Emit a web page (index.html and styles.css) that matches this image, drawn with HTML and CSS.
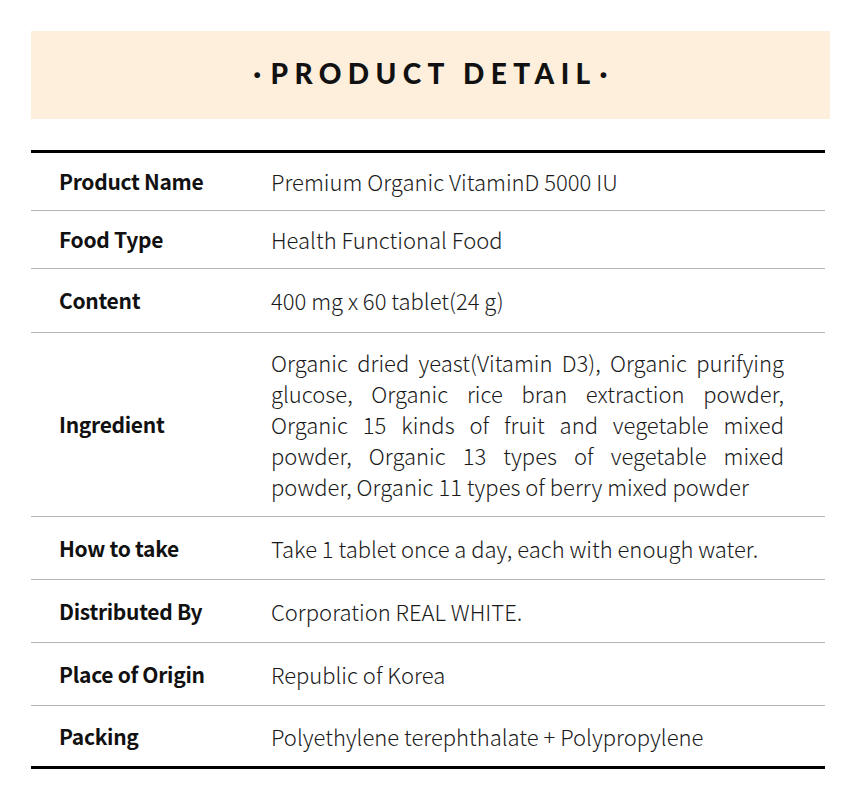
FILE: index.html
```html
<!DOCTYPE html>
<html lang="en">
<head>
<meta charset="utf-8">
<title>Product Detail</title>
<link rel="stylesheet" href="styles.css">
</head>
<body>
<div class="page">
  <header class="banner">
    <h1 class="banner-title"><span class="dot">·</span>PRODUCT DETAIL<span class="dot">·</span></h1>
  </header>
  <div class="spec">
    <div class="row r1"><div class="label">Product Name</div><div class="value">Premium Organic VitaminD 5000 IU</div></div>
    <div class="row r2"><div class="label">Food Type</div><div class="value">Health Functional Food</div></div>
    <div class="row r3"><div class="label">Content</div><div class="value">400 mg x 60 tablet(24 g)</div></div>
    <div class="row r4"><div class="label">Ingredient</div><div class="value justify">Organic dried yeast(Vitamin D3), Organic purifying glucose, Organic rice bran extraction powder, Organic 15 kinds of fruit and vegetable mixed powder, Organic 13 types of vegetable mixed powder, Organic 11 types of berry mixed powder</div></div>
    <div class="row"><div class="label">How to take</div><div class="value">Take 1 tablet once a day, each with enough water.</div></div>
    <div class="row"><div class="label">Distributed By</div><div class="value">Corporation REAL WHITE.</div></div>
    <div class="row"><div class="label">Place of Origin</div><div class="value">Republic of Korea</div></div>
    <div class="row r8"><div class="label">Packing</div><div class="value">Polyethylene terephthalate + Polypropylene</div></div>
  </div>
</div>
</body>
</html>
```
FILE: styles.css
```css
html, body {
  margin: 0;
  padding: 0;
  background: #ffffff;
}
.page {
  padding: 31px 30px 0 31px;
  font-family: "Noto Sans CJK KR", "Noto Sans", sans-serif;
  color: #111;
}
.banner {
  height: 88px;
  background: #fdefdc;
  display: flex;
  align-items: center;
  justify-content: center;
}
.banner-title {
  margin: 0 0 4px;
  font-family: Lato, "DejaVu Sans", sans-serif;
  font-weight: 900;
  font-size: 28px;
  line-height: 34px;
  letter-spacing: 6.4px;
  color: #111;
  padding-left: 6px;
}
.dot {
  font-weight: 900;
  margin: 0 3px;
}
.spec {
  margin-top: 31px;
  width: 794px;
  border-top: 3px solid #000;
  border-bottom: 3px solid #000;
}
.row {
  display: grid;
  grid-template-columns: 240px 513px;
  align-items: center;
  padding: 16px 0 15px;
  border-top: 1px solid #b4b4b4;
}
.row:first-child {
  border-top: none;
}
.r1 { padding: 13px 0; }
.r2 { padding: 13px 0; }
.r3 { padding: 16px 0; }
.r4 { padding: 14px 0; }
.r8 { padding: 15px 0 14px; }
.label {
  padding-left: 28px;
  font-weight: 700;
  font-size: 21px;
  line-height: 31px;
  letter-spacing: -0.3px;
}
.value {
  font-weight: 300;
  font-size: 22px;
  line-height: 31px;
  color: #1a1a1a;
}
.justify {
  text-align: justify;
}
```
